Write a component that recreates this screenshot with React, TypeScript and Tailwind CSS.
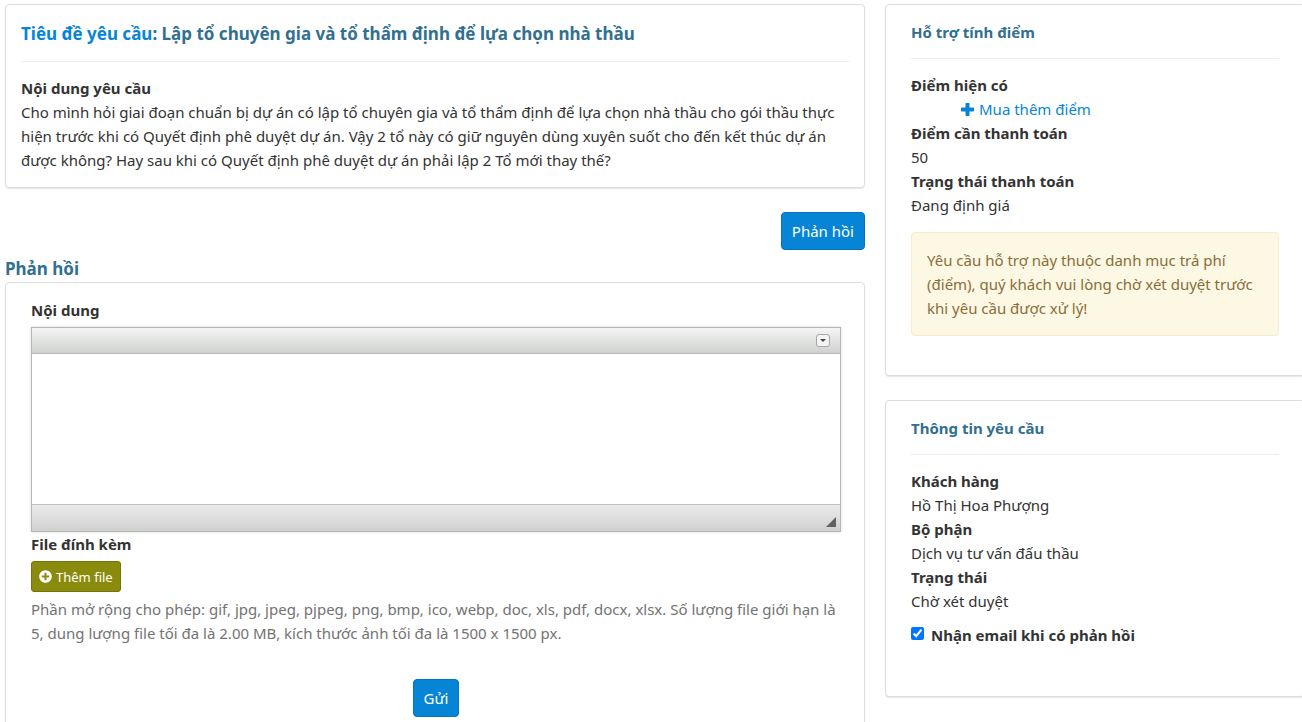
import { useState } from 'react';
import type { ReactNode } from 'react';
import { FaPlusCircle } from 'react-icons/fa';

const points = [
  { label: 'Điểm hiện có', value: '', link: 'Mua thêm điểm' },
  { label: 'Điểm cần thanh toán', value: '50' },
  { label: 'Trạng thái thanh toán', value: 'Đang định giá' },
];

const ticketInfo = [
  { label: 'Khách hàng', value: 'Hồ Thị Hoa Phượng' },
  { label: 'Bộ phận', value: 'Dịch vụ tư vấn đấu thầu' },
  { label: 'Trạng thái', value: 'Chờ xét duyệt' },
];

function PlusIcon() {
  return (
    <svg width="13" height="13" viewBox="0 0 13 13" fill="currentColor">
      <path d="M5.2 0h2.6q.7 0 .7.7v3.8h3.8q.7 0 .7.7v2.6q0 .7-.7.7H8.500v3.800q0 .7-.7.7H5.200q-.7 0-.7-.7V8.500H.7q-.7 0-.7-.7V5.200q0-.7.7-.7h3.800V.7q0-.7.7-.7z" />
    </svg>
  );
}

function SidePanel({ title, children }: { title: string; children: ReactNode }) {
  return (
    <section className="mb-6 rounded border border-[#ddd] bg-white px-[25px] py-[15px] shadow-[0_1px_1px_rgba(0,0,0,0.1)]">
      <h3 className="font-bold text-[#31708f]">{title}</h3>
      <hr className="my-[14px] border-[#eee]" />
      {children}
    </section>
  );
}

export default function App() {
  const [content, setContent] = useState('');
  const [notify, setNotify] = useState(true);
  const [toolbarOpen, setToolbarOpen] = useState(false);

  return (
    <div className="overflow-hidden bg-white pt-1 font-['Noto_Sans',sans-serif] text-[15px] leading-6 text-[#333]">
      <div className="-mr-[13px] -ml-[5px] grid grid-cols-3">
        <main className="col-span-2 px-[10px]">
          {/* Request */}
          <section className="mb-6 rounded border border-[#ddd] p-[15px] shadow-[0_1px_1px_rgba(0,0,0,0.1)]">
            <h1 className="text-[17px] leading-[27px] font-bold text-[#31708f]">
              <span className="text-[#0685d6]">Tiêu đề yêu cầu</span>: Lập tổ chuyên gia và tổ thẩm định để lựa chọn nhà thầu
            </h1>
            <hr className="my-[14px] border-[#eee]" />
            <h2 className="font-bold">Nội dung yêu cầu</h2>
            <p>
              Cho mình hỏi giai đoạn chuẩn bị dự án có lập tổ chuyên gia và tổ thẩm định để lựa chọn nhà thầu cho gói thầu thực
              hiện trước khi có Quyết định phê duyệt dự án. Vậy 2 tổ này có giữ nguyên dùng xuyên suốt cho đến kết thúc dự án
              được không? Hay sau khi có Quyết định phê duyệt dự án phải lập 2 Tổ mới thay thế?
            </p>
          </section>

          <div className="mb-[5px] flex justify-end">
            <button type="button" className="h-[38px] rounded border border-[#0674bb] bg-[#0685d6] px-[10px] text-white">
              Phản hồi
            </button>
          </div>

          {/* Reply form */}
          <h2 className="text-[17px] leading-[27px] font-bold text-[#31708f]">Phản hồi</h2>
          <form
            onSubmit={(e) => e.preventDefault()}
            className="rounded border border-[#ddd] py-[15px] pr-[23px] pl-[25px] shadow-[0_1px_1px_rgba(0,0,0,0.1)]"
          >
            <label htmlFor="content" className="mb-[5px] block font-bold">
              Nội dung
            </label>
            <div className="border border-[#b6b6b6] shadow-[0_0_3px_rgba(0,0,0,0.15)]">
              <div className="flex h-[26px] items-center justify-end border-b border-[#b6b6b6] bg-linear-to-b from-[#f5f5f5] to-[#cfd1cf] pr-[10px]">
                <button
                  type="button"
                  aria-label="Thanh công cụ"
                  aria-expanded={toolbarOpen}
                  onClick={() => setToolbarOpen(!toolbarOpen)}
                  className="flex h-[13px] w-[14px] items-center justify-center rounded-[3px] border border-[#a6a6a6] bg-[#f4f4f4]"
                >
                  <svg width="6" height="3" viewBox="0 0 6 3">
                    <path d="M0 0h6L3 3z" fill="#474747" />
                  </svg>
                </button>
              </div>
              <textarea
                id="content"
                value={content}
                onChange={(e) => setContent(e.target.value)}
                className="block h-[150px] w-full resize-none bg-white p-2 outline-none"
              />
              <div className="flex h-[27px] items-end justify-end border-t border-[#bfbfbf] bg-linear-to-b from-[#ebebeb] to-[#cfd1cf] pr-1 pb-1">
                <svg width="10" height="10" viewBox="0 0 10 10">
                  <path d="M10 0v10H0z" fill="#606060" />
                </svg>
              </div>
            </div>

            <p className="mb-[5px] font-bold">File đính kèm</p>
            <button
              type="button"
              className="flex h-[31px] items-center gap-1 rounded-[3px] border border-[#74740a] bg-[#8a8a0c] px-[7px] text-[13px] text-white"
            >
              <FaPlusCircle className="size-[13px]" />
              Thêm file
            </button>
            <p className="mt-[5px] text-[#737373]">
              Phần mở rộng cho phép: gif, jpg, jpeg, pjpeg, png, bmp, ico, webp, doc, xls, pdf, docx, xlsx. Số lượng file giới hạn là
              5, dung lượng file tối đa là 2.00 MB, kích thước ảnh tối đa là 1500 x 1500 px.
            </p>
            <div className="mt-[34px] flex justify-center">
              <button type="submit" className="h-[38px] rounded border border-[#0674bb] bg-[#0685d6] px-[10px] text-white">
                Gửi
              </button>
            </div>
          </form>
        </main>

        <aside className="px-[10px]">
          <SidePanel title="Hỗ trợ tính điểm">
            <dl>
              {points.map((item) => (
                <div key={item.label}>
                  <dt className="font-bold">{item.label}</dt>
                  <dd className="flex">
                    {item.value}
                    {item.link && (
                      <a href="#" className="ml-[50px] flex items-center gap-[5px] text-[#0685d6] hover:underline">
                        <PlusIcon />
                        {item.link}
                      </a>
                    )}
                  </dd>
                </div>
              ))}
            </dl>
            <div className="mt-[15px] mb-6 rounded border border-[#faebcc] bg-[#fcf8e3] p-[15px] text-[#8a6d3b]">
              Yêu cầu hỗ trợ này thuộc danh mục trả phí (điểm), quý khách vui lòng chờ xét duyệt trước khi yêu cầu được xử lý!
            </div>
          </SidePanel>

          <SidePanel title="Thông tin yêu cầu">
            <dl>
              {ticketInfo.map((item) => (
                <div key={item.label}>
                  <dt className="font-bold">{item.label}</dt>
                  <dd>{item.value}</dd>
                </div>
              ))}
            </dl>
            <label className="mt-[10px] mb-[34px] flex items-start gap-[7px] font-bold">
              <input
                type="checkbox"
                checked={notify}
                onChange={(e) => setNotify(e.target.checked)}
                className="mt-1 size-[13px]"
              />
              Nhận email khi có phản hồi
            </label>
          </SidePanel>
        </aside>
      </div>
    </div>
  );
}
